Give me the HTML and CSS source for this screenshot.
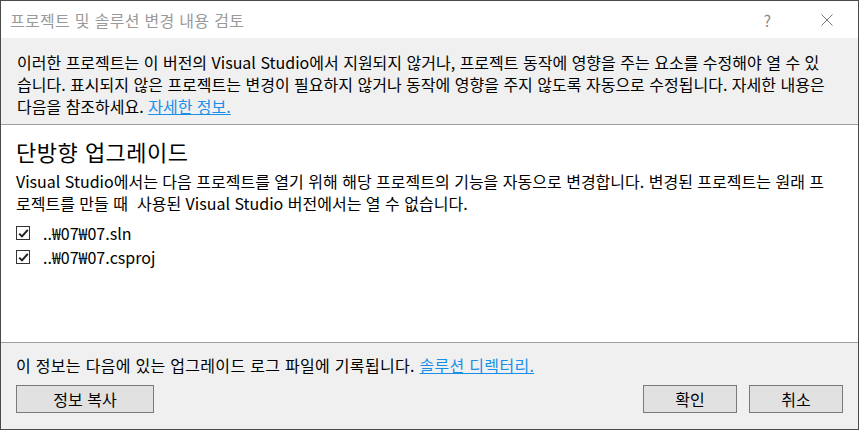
FILE: index.html
```html
<!DOCTYPE html>
<html lang="ko">
<head>
    <meta charset="UTF-8">
    <title>프로젝트 및 솔루션 변경 내용 검토</title>
    <link rel="stylesheet" href="styles.css">
</head>
<body>
    <div class="dialog">
        <div class="titlebar">
            <span class="title">프로젝트 및 솔루션 변경 내용 검토</span>
            <span class="help">?</span>
            <svg class="close" width="12" height="12" viewBox="0 0 12 12">
                <path d="M0.5 0.5 L11.5 11.5 M11.5 0.5 L0.5 11.5" stroke="#7a7a7a" stroke-width="1" fill="none"/>
            </svg>
        </div>

        <div class="notice">
            이러한 프로젝트는 이 버전의 Visual Studio에서 지원되지 않거나, 프로젝트 동작에 영향을 주는 요소를 수정해야 열 수 있<br>
            습니다. 표시되지 않은 프로젝트는 변경이 필요하지 않거나 동작에 영향을 주지 않도록 자동으로 수정됩니다. 자세한 내용은<br>
            다음을 참조하세요. <a href="#" class="link">자세한 정보.</a>
        </div>

        <div class="content">
            <h1>단방향 업그레이드</h1>
            <p>
                Visual Studio에서는 다음 프로젝트를 열기 위해 해당 프로젝트의 기능을 자동으로 변경합니다. 변경된 프로젝트는 원래 프<br>
                로젝트를 만들 때&nbsp; 사용된 Visual Studio 버전에서는 열 수 없습니다.
            </p>
            <ul class="files">
                <li>
                    <span class="checkbox">
                        <svg width="11" height="11" viewBox="0 0 11 11"><path d="M1.2 5.6 L4 8.4 L9.8 1.8" stroke="#222" stroke-width="2" fill="none"/></svg>
                    </span>
                    ..₩07₩07.sln
                </li>
                <li>
                    <span class="checkbox">
                        <svg width="11" height="11" viewBox="0 0 11 11"><path d="M1.2 5.6 L4 8.4 L9.8 1.8" stroke="#222" stroke-width="2" fill="none"/></svg>
                    </span>
                    ..₩07₩07.csproj
                </li>
            </ul>
        </div>

        <div class="footer">
            <div class="log">이 정보는 다음에 있는 업그레이드 로그 파일에 기록됩니다. <a href="#" class="link">솔루션 디렉터리.</a></div>
            <div class="buttons">
                <button class="btn btn-copy">정보 복사</button>
                <div class="spacer"></div>
                <button class="btn">확인</button>
                <button class="btn">취소</button>
            </div>
        </div>
    </div>
</body>
</html>
```

FILE: styles.css
```css
body {
    margin: 0;
    font-family: "Noto Sans CJK KR", "Noto Sans", sans-serif;
    font-size: 16px;
    color: #000;
    background: #fff;
}

.dialog {
    width: 859px;
    height: 430px;
    box-sizing: border-box;
    border: 1px solid #4a4a4a;
    display: flex;
    flex-direction: column;
}

.titlebar {
    height: 37px;
    display: flex;
    align-items: center;
    padding-left: 9px;
    background: #fff;
}

.title {
    flex: 1;
    color: #9a9a9a;
    font-size: 16px;
    letter-spacing: 0.3px;
}

.help {
    color: #8a8a8a;
    font-size: 16px;
    margin-right: 50px;
}

.close {
    margin-right: 25px;
}

.notice {
    background: #f0f0f0;
    border-bottom: 1px solid #a0a0a0;
    padding: 13px 16px 7px 16px;
    line-height: 22px;
}

.link {
    color: #1a8fe8;
    text-decoration: underline;
}

.content {
    flex: 1;
    padding: 0 15px;
}

    .content h1 {
        font-size: 22px;
        font-weight: normal;
        line-height: 28px;
        margin: 12px 0 0 0;
        letter-spacing: 0.5px;
    }

    .content p {
        margin: 5px 0 0 0;
        line-height: 22px;
    }

.files {
    list-style: none;
    margin: 7px 0 0 0;
    padding: 0;
}

    .files li {
        height: 24px;
        display: flex;
        align-items: center;
        gap: 13px;
    }

.checkbox {
    width: 12px;
    height: 12px;
    border: 1px solid #333;
    display: flex;
    align-items: center;
    justify-content: center;
}

.footer {
    background: #f0f0f0;
    border-top: 1px solid #a0a0a0;
    padding: 12px 15px 16px 15px;
}

.log {
    line-height: 20px;
    letter-spacing: 0.3px;
}

.buttons {
    display: flex;
    gap: 12px;
    margin-top: 10px;
}

.spacer {
    flex: 1;
}

.btn {
    width: 94px;
    height: 28px;
    background: #e1e1e1;
    border: 1px solid #7a7a7a;
    font-family: inherit;
    font-size: 16px;
    color: #000;
    padding: 0;
}

.btn-copy {
    width: 138px;
}
```
